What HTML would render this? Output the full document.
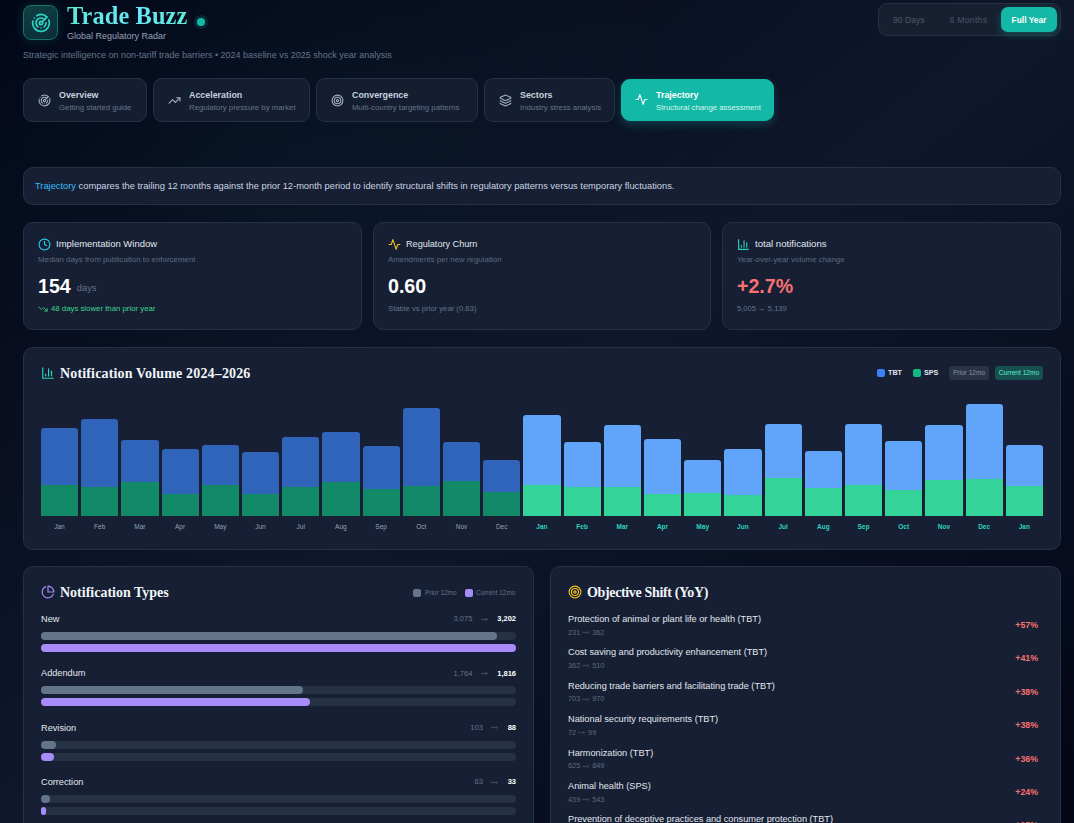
<!DOCTYPE html>
<html><head><meta charset="utf-8">
<style>
*{box-sizing:border-box;margin:0;padding:0}
html,body{width:1074px;height:823px;overflow:hidden}
body{background:#0a1020;font-family:"Liberation Sans",sans-serif;color:#e2e8f0;position:relative}
.abs{position:absolute;white-space:nowrap}
.card{position:absolute;background:#161f33;border:1px solid #273145;border-radius:10px}
.serif{font-family:"Liberation Serif",serif}
svg{display:block}
.tab{position:absolute;top:78px;height:44px;border-radius:9px;background:#151e31;border:1px solid #263044}
.tab .ic{position:absolute;left:13.6px;top:14.6px}
.tab .t1{position:absolute;left:35px;top:11px;font-size:8.9px;line-height:11px;font-weight:700;color:#c6d1df}
.tab .t2{position:absolute;left:35px;top:24px;font-size:7.8px;line-height:10px;color:#64748b}
.kt{font-size:9.5px;line-height:12px;color:#e2e8f0}
.ks{font-size:7.9px;line-height:10px;color:#5d6b81}
.bar{position:absolute;border-radius:3px 3px 0 0;overflow:hidden}
.ml{position:absolute;top:522px;font-size:6.5px;line-height:9px;text-align:center;width:37px}
.h2{font-family:"Liberation Serif",serif;font-weight:700;font-size:14px;line-height:16px;color:#f1f5f9}
</style></head><body>
<div class="abs" style="left:0;top:0;width:1074px;height:823px;background:linear-gradient(to bottom right,#020617 0%,#0f172a 50%,#020617 100%)"></div>
<div class="abs" style="left:0;top:0;width:1074px;height:823px;background:radial-gradient(ellipse 420px 260px at 300px 150px,rgba(20,184,166,0.045),rgba(20,184,166,0) 100%)"></div>

<div class="abs" style="left:23px;top:5px;width:35px;height:35px;border-radius:8px;background:linear-gradient(160deg,#0f4044,#0b2c3a);border:1px solid #177268;box-shadow:0 0 12px rgba(20,184,166,0.18)">
  <svg width="20" height="20" viewBox="0 0 24 24" style="position:absolute;left:6.8px;top:6.6px" fill="none" stroke="#2dd4bf" stroke-width="2" stroke-linecap="round" stroke-linejoin="round"><path d="M19.07 4.93A10 10 0 0 0 6.99 3.34"/><path d="M4 6h.01"/><path d="M2.29 9.62A10 10 0 1 0 21.31 8.35"/><path d="M16.24 7.76A6 6 0 1 0 8.23 16.67"/><path d="M12 18h.01"/><path d="M17.99 11.66A6 6 0 0 1 15.77 16.67"/><circle cx="12" cy="12" r="2"/><path d="m13.41 10.59 5.66-5.66"/></svg>
</div>
<div class="abs serif" style="left:67px;top:0.9px;font-size:24.4px;letter-spacing:0.1px;font-weight:700;line-height:30px;color:#5eead4;background:linear-gradient(90deg,#5eead4,#67e8f9 60%,#5eead4);-webkit-background-clip:text;background-clip:text;-webkit-text-fill-color:transparent">Trade Buzz</div>
<div class="abs" style="left:193.5px;top:14.8px;width:14.5px;height:14.5px;border-radius:50%;background:rgba(20,184,166,0.16)"></div>
<div class="abs" style="left:196.6px;top:17.9px;width:8.4px;height:8.4px;border-radius:50%;background:#14b8a6"></div>
<div class="abs" style="left:67px;top:30px;font-size:9px;line-height:12px;color:#94a3b8">Global Regulatory Radar</div>
<div class="abs" style="left:23px;top:49px;font-size:9px;line-height:12px;color:#64748b">Strategic intelligence on non-tariff trade barriers • 2024 baseline vs 2025 shock year analysis</div>
<div class="abs" style="left:878px;top:3px;width:183px;height:33px;border-radius:9px;background:#172031;border:1px solid #263043"></div>
<div class="abs" style="left:893px;top:15px;font-size:8.6px;line-height:11px;color:#4b5668">90 Days</div>
<div class="abs" style="left:949.5px;top:15px;font-size:8.6px;letter-spacing:0.3px;line-height:11px;color:#4b5668">6 Months</div>
<div class="abs" style="left:1001px;top:7px;width:56px;height:25px;border-radius:7px;background:#14b8a6;box-shadow:0 3px 8px rgba(20,184,166,0.3);font-size:8.4px;font-weight:700;color:#fff;text-align:center;line-height:27px">Full Year</div>

<div class="tab" style="left:23px;width:124px"><svg class="ic" width="13" height="13" viewBox="0 0 24 24" fill="none" stroke="#a3b1c6" stroke-width="2" stroke-linecap="round" stroke-linejoin="round"><path d="M19.07 4.93A10 10 0 0 0 6.99 3.34"/><path d="M4 6h.01"/><path d="M2.29 9.62A10 10 0 1 0 21.31 8.35"/><path d="M16.24 7.76A6 6 0 1 0 8.23 16.67"/><path d="M12 18h.01"/><path d="M17.99 11.66A6 6 0 0 1 15.77 16.67"/><circle cx="12" cy="12" r="2"/><path d="m13.41 10.59 5.66-5.66"/></svg><div class="t1">Overview</div><div class="t2">Getting started guide</div></div>
<div class="tab" style="left:153px;width:157px"><svg class="ic" width="13" height="13" viewBox="0 0 24 24" fill="none" stroke="#a3b1c6" stroke-width="2" stroke-linecap="round" stroke-linejoin="round"><polyline points="22 7 13.5 15.5 8.5 10.5 2 17"/><polyline points="16 7 22 7 22 13"/></svg><div class="t1">Acceleration</div><div class="t2">Regulatory pressure by market</div></div>
<div class="tab" style="left:316px;width:162px"><svg class="ic" width="13" height="13" viewBox="0 0 24 24" fill="none" stroke="#a3b1c6" stroke-width="2" stroke-linecap="round" stroke-linejoin="round"><circle cx="12" cy="12" r="10"/><circle cx="12" cy="12" r="6"/><circle cx="12" cy="12" r="2"/></svg><div class="t1">Convergence</div><div class="t2">Multi-country targeting patterns</div></div>
<div class="tab" style="left:484px;width:131px"><svg class="ic" width="13" height="13" viewBox="0 0 24 24" fill="none" stroke="#a3b1c6" stroke-width="2" stroke-linecap="round" stroke-linejoin="round"><path d="m12.83 2.18a2 2 0 0 0-1.66 0L2.6 6.08a1 1 0 0 0 0 1.83l8.58 3.91a2 2 0 0 0 1.66 0l8.58-3.9a1 1 0 0 0 0-1.83Z"/><path d="m22 17.65-9.17 4.16a2 2 0 0 1-1.66 0L2 17.65"/><path d="m22 12.65-9.17 4.16a2 2 0 0 1-1.66 0L2 12.65"/></svg><div class="t1">Sectors</div><div class="t2">Industry stress analysis</div></div>
<div class="tab" style="left:621px;width:153px;top:79px;height:42px;background:#14b8a6;border-color:#14b8a6;box-shadow:0 4px 10px rgba(20,184,166,0.25)"><svg class="ic" style="top:13.4px;left:12.8px" width="13" height="13" viewBox="0 0 24 24" fill="none" stroke="#ffffff" stroke-width="2" stroke-linecap="round" stroke-linejoin="round"><path d="M22 12h-4l-3 9L9 3l-3 9H2"/></svg><div class="t1" style="color:#fff;top:9.8px;left:34px">Trajectory</div><div class="t2" style="color:#d5f5ef;top:23px;left:34px">Structural change assessment</div></div>
<div class="card" style="left:23px;top:167px;width:1038px;height:38px;border-radius:10px"></div>
<div class="abs" style="left:35px;top:180px;font-size:9.3px;line-height:12px;color:#cbd5e1"><span style="color:#38bdf8">Trajectory</span> compares the trailing 12 months against the prior 12-month period to identify structural shifts in regulatory patterns versus temporary fluctuations.</div>

<div class="card" style="left:23px;top:222px;width:339px;height:108px"><div class="abs" style="left:13.7px;top:14.7px"><svg width="13" height="13" viewBox="0 0 24 24" fill="none" stroke="#22d3ee" stroke-width="2" stroke-linecap="round" stroke-linejoin="round"><circle cx="12" cy="12" r="10"/><polyline points="12 6 12 12 16 14"/></svg></div><div class="abs kt" style="left:32px;top:15px;font-size:9.47px">Implementation Window</div><div class="abs ks" style="left:14px;top:32px">Median days from publication to enforcement</div><div class="abs" style="left:14px;top:50.6px;font-size:19.6px;line-height:24px;font-weight:700;color:#ffffff">154<span style="font-size:9.4px;font-weight:400;color:#64748b;margin-left:6px;position:relative;top:-1.5px">days</span></div><div class="abs" style="left:14px;top:80.5px;font-size:8px;line-height:10px"><svg style="display:inline-block;vertical-align:-1px;margin-right:3px" width="10" height="10" viewBox="0 0 24 24" fill="none" stroke="#3fd68c" stroke-width="2" stroke-linecap="round" stroke-linejoin="round"><polyline points="22 17 13.5 8.5 8.5 13.5 2 7"/><polyline points="16 17 22 17 22 11"/></svg><span style="color:#3fd68c;font-size:7.8px;position:relative;top:-1.2px">48 days slower than prior year</span></div></div>
<div class="card" style="left:373px;top:222px;width:338px;height:108px"><div class="abs" style="left:13.7px;top:14.7px"><svg width="13" height="13" viewBox="0 0 24 24" fill="none" stroke="#f2c21f" stroke-width="2" stroke-linecap="round" stroke-linejoin="round"><path d="M22 12h-4l-3 9L9 3l-3 9H2"/></svg></div><div class="abs kt" style="left:32px;top:15px;font-size:9.12px">Regulatory Churn</div><div class="abs ks" style="left:14px;top:32px">Amendments per new regulation</div><div class="abs" style="left:14px;top:50.6px;font-size:19.6px;line-height:24px;font-weight:700;color:#ffffff">0.60</div><div class="abs" style="left:14px;top:81.2px;font-size:8px;line-height:10px"><span style="color:#64748b;font-size:7.7px">Stable vs prior year (0.63)</span></div></div>
<div class="card" style="left:722px;top:222px;width:339px;height:108px"><div class="abs" style="left:13.7px;top:14.7px"><svg width="13" height="13" viewBox="0 0 24 24" fill="none" stroke="#2dd4bf" stroke-width="2" stroke-linecap="round" stroke-linejoin="round"><path d="M3 3v18h18"/><path d="M18 17V9"/><path d="M13 17V5"/><path d="M8 17v-3"/></svg></div><div class="abs kt" style="left:32px;top:15px;font-size:9.62px">total notifications</div><div class="abs ks" style="left:14px;top:32px">Year-over-year volume change</div><div class="abs" style="left:14px;top:50.6px;font-size:19.6px;line-height:24px;font-weight:700;color:#f87171">+2.7%</div><div class="abs" style="left:14px;top:81.2px;font-size:8px;line-height:10px"><span style="color:#64748b;font-size:7.6px">5,005 &#8594; 5,139</span></div></div>
<div class="card" style="left:23px;top:347px;width:1038px;height:203px"></div>
<div class="abs" style="left:40.8px;top:365.8px"><svg width="14" height="14" viewBox="0 0 24 24" fill="none" stroke="#2dd4bf" stroke-width="2" stroke-linecap="round" stroke-linejoin="round"><path d="M3 3v18h18"/><path d="M18 17V9"/><path d="M13 17V5"/><path d="M8 17v-3"/></svg></div>
<div class="abs h2" style="left:60px;top:366px;letter-spacing:0.16px">Notification Volume 2024–2026</div>
<div class="abs" style="left:877px;top:369px;width:8px;height:8px;border-radius:2px;background:#3b82f6"></div>
<div class="abs" style="left:888px;top:367px;font-size:7.2px;line-height:11px;font-weight:700;color:#e2e8f0">TBT</div>
<div class="abs" style="left:913px;top:369px;width:8px;height:8px;border-radius:2px;background:#10b981"></div>
<div class="abs" style="left:924px;top:367px;font-size:7.2px;line-height:11px;font-weight:700;color:#e2e8f0">SPS</div>
<div class="abs" style="left:949px;top:366px;width:40px;height:14px;border-radius:3px;background:#2a3446;color:#8391a7;font-size:6.6px;line-height:14px;text-align:center">Prior 12mo</div>
<div class="abs" style="left:995px;top:366px;width:48px;height:14px;border-radius:3px;background:#16504f;color:#5eead4;font-size:6.6px;line-height:14px;text-align:center">Current 12mo</div>
<div class="bar" style="left:41.00px;top:428px;width:37.2px;height:88px;background:#3064bb"><div style="position:absolute;left:0;right:0;bottom:0;height:31px;background:#128a68"></div></div>
<div class="ml" style="left:41.00px;color:#94a3b8;font-weight:400">Jan</div>
<div class="bar" style="left:81.20px;top:419px;width:37.2px;height:97px;background:#3064bb"><div style="position:absolute;left:0;right:0;bottom:0;height:29px;background:#128a68"></div></div>
<div class="ml" style="left:81.20px;color:#94a3b8;font-weight:400">Feb</div>
<div class="bar" style="left:121.40px;top:440px;width:37.2px;height:76px;background:#3064bb"><div style="position:absolute;left:0;right:0;bottom:0;height:34px;background:#128a68"></div></div>
<div class="ml" style="left:121.40px;color:#94a3b8;font-weight:400">Mar</div>
<div class="bar" style="left:161.60px;top:449px;width:37.2px;height:67px;background:#3064bb"><div style="position:absolute;left:0;right:0;bottom:0;height:22px;background:#128a68"></div></div>
<div class="ml" style="left:161.60px;color:#94a3b8;font-weight:400">Apr</div>
<div class="bar" style="left:201.80px;top:445px;width:37.2px;height:71px;background:#3064bb"><div style="position:absolute;left:0;right:0;bottom:0;height:31px;background:#128a68"></div></div>
<div class="ml" style="left:201.80px;color:#94a3b8;font-weight:400">May</div>
<div class="bar" style="left:242.00px;top:452px;width:37.2px;height:64px;background:#3064bb"><div style="position:absolute;left:0;right:0;bottom:0;height:22px;background:#128a68"></div></div>
<div class="ml" style="left:242.00px;color:#94a3b8;font-weight:400">Jun</div>
<div class="bar" style="left:282.20px;top:437px;width:37.2px;height:79px;background:#3064bb"><div style="position:absolute;left:0;right:0;bottom:0;height:29px;background:#128a68"></div></div>
<div class="ml" style="left:282.20px;color:#94a3b8;font-weight:400">Jul</div>
<div class="bar" style="left:322.40px;top:432px;width:37.2px;height:84px;background:#3064bb"><div style="position:absolute;left:0;right:0;bottom:0;height:34px;background:#128a68"></div></div>
<div class="ml" style="left:322.40px;color:#94a3b8;font-weight:400">Aug</div>
<div class="bar" style="left:362.60px;top:446px;width:37.2px;height:70px;background:#3064bb"><div style="position:absolute;left:0;right:0;bottom:0;height:27px;background:#128a68"></div></div>
<div class="ml" style="left:362.60px;color:#94a3b8;font-weight:400">Sep</div>
<div class="bar" style="left:402.80px;top:408px;width:37.2px;height:108px;background:#3064bb"><div style="position:absolute;left:0;right:0;bottom:0;height:30px;background:#128a68"></div></div>
<div class="ml" style="left:402.80px;color:#94a3b8;font-weight:400">Oct</div>
<div class="bar" style="left:443.00px;top:442px;width:37.2px;height:74px;background:#3064bb"><div style="position:absolute;left:0;right:0;bottom:0;height:35px;background:#128a68"></div></div>
<div class="ml" style="left:443.00px;color:#94a3b8;font-weight:400">Nov</div>
<div class="bar" style="left:483.20px;top:460px;width:37.2px;height:56px;background:#3064bb"><div style="position:absolute;left:0;right:0;bottom:0;height:24px;background:#128a68"></div></div>
<div class="ml" style="left:483.20px;color:#94a3b8;font-weight:400">Dec</div>
<div class="bar" style="left:523.40px;top:415px;width:37.2px;height:101px;background:#60a5fa"><div style="position:absolute;left:0;right:0;bottom:0;height:31px;background:#34d399"></div></div>
<div class="ml" style="left:523.40px;color:#2dd4bf;font-weight:700">Jan</div>
<div class="bar" style="left:563.60px;top:442px;width:37.2px;height:74px;background:#60a5fa"><div style="position:absolute;left:0;right:0;bottom:0;height:29px;background:#34d399"></div></div>
<div class="ml" style="left:563.60px;color:#2dd4bf;font-weight:700">Feb</div>
<div class="bar" style="left:603.80px;top:425px;width:37.2px;height:91px;background:#60a5fa"><div style="position:absolute;left:0;right:0;bottom:0;height:29px;background:#34d399"></div></div>
<div class="ml" style="left:603.80px;color:#2dd4bf;font-weight:700">Mar</div>
<div class="bar" style="left:644.00px;top:439px;width:37.2px;height:77px;background:#60a5fa"><div style="position:absolute;left:0;right:0;bottom:0;height:22px;background:#34d399"></div></div>
<div class="ml" style="left:644.00px;color:#2dd4bf;font-weight:700">Apr</div>
<div class="bar" style="left:684.20px;top:460px;width:37.2px;height:56px;background:#60a5fa"><div style="position:absolute;left:0;right:0;bottom:0;height:23px;background:#34d399"></div></div>
<div class="ml" style="left:684.20px;color:#2dd4bf;font-weight:700">May</div>
<div class="bar" style="left:724.40px;top:449px;width:37.2px;height:67px;background:#60a5fa"><div style="position:absolute;left:0;right:0;bottom:0;height:21px;background:#34d399"></div></div>
<div class="ml" style="left:724.40px;color:#2dd4bf;font-weight:700">Jun</div>
<div class="bar" style="left:764.60px;top:424px;width:37.2px;height:92px;background:#60a5fa"><div style="position:absolute;left:0;right:0;bottom:0;height:38px;background:#34d399"></div></div>
<div class="ml" style="left:764.60px;color:#2dd4bf;font-weight:700">Jul</div>
<div class="bar" style="left:804.80px;top:451px;width:37.2px;height:65px;background:#60a5fa"><div style="position:absolute;left:0;right:0;bottom:0;height:28px;background:#34d399"></div></div>
<div class="ml" style="left:804.80px;color:#2dd4bf;font-weight:700">Aug</div>
<div class="bar" style="left:845.00px;top:424px;width:37.2px;height:92px;background:#60a5fa"><div style="position:absolute;left:0;right:0;bottom:0;height:31px;background:#34d399"></div></div>
<div class="ml" style="left:845.00px;color:#2dd4bf;font-weight:700">Sep</div>
<div class="bar" style="left:885.20px;top:441px;width:37.2px;height:75px;background:#60a5fa"><div style="position:absolute;left:0;right:0;bottom:0;height:26px;background:#34d399"></div></div>
<div class="ml" style="left:885.20px;color:#2dd4bf;font-weight:700">Oct</div>
<div class="bar" style="left:925.40px;top:425px;width:37.2px;height:91px;background:#60a5fa"><div style="position:absolute;left:0;right:0;bottom:0;height:36px;background:#34d399"></div></div>
<div class="ml" style="left:925.40px;color:#2dd4bf;font-weight:700">Nov</div>
<div class="bar" style="left:965.60px;top:404px;width:37.2px;height:112px;background:#60a5fa"><div style="position:absolute;left:0;right:0;bottom:0;height:37px;background:#34d399"></div></div>
<div class="ml" style="left:965.60px;color:#2dd4bf;font-weight:700">Dec</div>
<div class="bar" style="left:1005.80px;top:445px;width:37.2px;height:71px;background:#60a5fa"><div style="position:absolute;left:0;right:0;bottom:0;height:30px;background:#34d399"></div></div>
<div class="ml" style="left:1005.80px;color:#2dd4bf;font-weight:700">Jan</div>
<div class="card" style="left:23px;top:566px;width:511px;height:300px"></div>
<div class="abs" style="left:41px;top:585px"><svg width="14" height="14" viewBox="0 0 24 24" fill="none" stroke="#a78bfa" stroke-width="2" stroke-linecap="round" stroke-linejoin="round"><path d="M21.21 15.89A10 10 0 1 1 8 2.83"/><path d="M22 12A10 10 0 0 0 12 2v10z"/></svg></div>
<div class="abs h2" style="left:60px;top:584.9px">Notification Types</div>
<div class="abs" style="left:413px;top:588.5px;width:8px;height:8px;border-radius:2px;background:#64748b"></div>
<div class="abs" style="left:425px;top:588px;font-size:6.45px;line-height:10px;color:#64748b">Prior 12mo</div>
<div class="abs" style="left:465px;top:588.5px;width:8px;height:8px;border-radius:2px;background:#a78bfa"></div>
<div class="abs" style="left:476px;top:588px;font-size:6.45px;line-height:10px;color:#64748b">Current 12mo</div>
<div class="abs" style="left:41px;top:613.0px;font-size:9.2px;line-height:12px;color:#e2e8f0">New</div>
<div class="abs" style="right:558px;top:613.2px;font-size:7.5px;line-height:12px;color:#ffffff;font-weight:700;text-align:right"><span style="color:#64748b;font-weight:400;font-size:7.6px">3,075</span><svg style="display:inline-block;vertical-align:middle;position:relative;top:1px;margin:-2px 9px 0 8.6px" width="7.2" height="5" viewBox="0 0 7.2 5"><path d="M0 2.5H5.7" stroke="#3c475a" stroke-width="1.3"/><path d="M4.800000000000001 0.7L7.2 2.5L4.800000000000001 4.3Z" fill="#3c475a"/></svg>3,202</div>
<div class="abs" style="left:41px;top:632.0px;width:475px;height:8px;border-radius:4px;background:#263143"></div>
<div class="abs" style="left:41px;top:632.0px;width:456.2px;height:8px;border-radius:4px;background:#64748b"></div>
<div class="abs" style="left:41px;top:644.0px;width:475px;height:8px;border-radius:4px;background:#263143"></div>
<div class="abs" style="left:41px;top:644.0px;width:475.0px;height:8px;border-radius:4px;background:#a78bfa"></div>
<div class="abs" style="left:41px;top:667.3px;font-size:9.2px;line-height:12px;color:#e2e8f0">Addendum</div>
<div class="abs" style="right:558px;top:667.5px;font-size:7.5px;line-height:12px;color:#ffffff;font-weight:700;text-align:right"><span style="color:#64748b;font-weight:400;font-size:7.6px">1,764</span><svg style="display:inline-block;vertical-align:middle;position:relative;top:1px;margin:-2px 9px 0 8.6px" width="7.2" height="5" viewBox="0 0 7.2 5"><path d="M0 2.5H5.7" stroke="#3c475a" stroke-width="1.3"/><path d="M4.800000000000001 0.7L7.2 2.5L4.800000000000001 4.3Z" fill="#3c475a"/></svg>1,816</div>
<div class="abs" style="left:41px;top:686.3px;width:475px;height:8px;border-radius:4px;background:#263143"></div>
<div class="abs" style="left:41px;top:686.3px;width:261.7px;height:8px;border-radius:4px;background:#64748b"></div>
<div class="abs" style="left:41px;top:698.3px;width:475px;height:8px;border-radius:4px;background:#263143"></div>
<div class="abs" style="left:41px;top:698.3px;width:269.4px;height:8px;border-radius:4px;background:#a78bfa"></div>
<div class="abs" style="left:41px;top:721.7px;font-size:9.2px;line-height:12px;color:#e2e8f0">Revision</div>
<div class="abs" style="right:558px;top:721.9px;font-size:7.5px;line-height:12px;color:#ffffff;font-weight:700;text-align:right"><span style="color:#64748b;font-weight:400;font-size:7.6px">103</span><svg style="display:inline-block;vertical-align:middle;position:relative;top:1px;margin:-2px 9px 0 8.6px" width="7.2" height="5" viewBox="0 0 7.2 5"><path d="M0 2.5H5.7" stroke="#3c475a" stroke-width="1.3"/><path d="M4.800000000000001 0.7L7.2 2.5L4.800000000000001 4.3Z" fill="#3c475a"/></svg>88</div>
<div class="abs" style="left:41px;top:740.7px;width:475px;height:8px;border-radius:4px;background:#263143"></div>
<div class="abs" style="left:41px;top:740.7px;width:15.3px;height:8px;border-radius:4px;background:#64748b"></div>
<div class="abs" style="left:41px;top:752.7px;width:475px;height:8px;border-radius:4px;background:#263143"></div>
<div class="abs" style="left:41px;top:752.7px;width:13.1px;height:8px;border-radius:4px;background:#a78bfa"></div>
<div class="abs" style="left:41px;top:776.0px;font-size:9.2px;line-height:12px;color:#e2e8f0">Correction</div>
<div class="abs" style="right:558px;top:776.2px;font-size:7.5px;line-height:12px;color:#ffffff;font-weight:700;text-align:right"><span style="color:#64748b;font-weight:400;font-size:7.6px">63</span><svg style="display:inline-block;vertical-align:middle;position:relative;top:1px;margin:-2px 9px 0 8.6px" width="7.2" height="5" viewBox="0 0 7.2 5"><path d="M0 2.5H5.7" stroke="#3c475a" stroke-width="1.3"/><path d="M4.800000000000001 0.7L7.2 2.5L4.800000000000001 4.3Z" fill="#3c475a"/></svg>33</div>
<div class="abs" style="left:41px;top:795.0px;width:475px;height:8px;border-radius:4px;background:#263143"></div>
<div class="abs" style="left:41px;top:795.0px;width:9.3px;height:8px;border-radius:4px;background:#64748b"></div>
<div class="abs" style="left:41px;top:807.0px;width:475px;height:8px;border-radius:4px;background:#263143"></div>
<div class="abs" style="left:41px;top:807.0px;width:5.0px;height:8px;border-radius:4px;background:#a78bfa"></div>
<div class="card" style="left:550px;top:566px;width:511px;height:300px"></div>
<div class="abs" style="left:568px;top:585px"><svg width="14" height="14" viewBox="0 0 24 24" fill="none" stroke="#f2c21f" stroke-width="2" stroke-linecap="round" stroke-linejoin="round"><circle cx="12" cy="12" r="10"/><circle cx="12" cy="12" r="6"/><circle cx="12" cy="12" r="2"/></svg></div>
<div class="abs h2" style="left:587px;top:584.9px;letter-spacing:-0.35px">Objective Shift (YoY)</div>
<div class="abs" style="left:568px;top:613.0px;font-size:9.2px;line-height:12px;color:#e2e8f0">Protection of animal or plant life or health (TBT)</div>
<div class="abs" style="left:568px;top:627.5px;font-size:7.4px;line-height:10px;color:#5d6c82">231<svg style="display:inline-block;vertical-align:middle;position:relative;top:1px;margin:-2px 2.2px 0 2px" width="7.6" height="5" viewBox="0 0 7.6 5"><path d="M0 2.5H6.1" stroke="#364052" stroke-width="1.3"/><path d="M5.199999999999999 0.7L7.6 2.5L5.199999999999999 4.3Z" fill="#364052"/></svg>362</div>
<div class="abs" style="right:36px;top:619.0px;font-size:8.8px;line-height:12px;font-weight:700;color:#f87171">+57%</div>
<div class="abs" style="left:568px;top:646.4px;font-size:9.2px;line-height:12px;color:#e2e8f0">Cost saving and productivity enhancement (TBT)</div>
<div class="abs" style="left:568px;top:660.9px;font-size:7.4px;line-height:10px;color:#5d6c82">362<svg style="display:inline-block;vertical-align:middle;position:relative;top:1px;margin:-2px 2.2px 0 2px" width="7.6" height="5" viewBox="0 0 7.6 5"><path d="M0 2.5H6.1" stroke="#364052" stroke-width="1.3"/><path d="M5.199999999999999 0.7L7.6 2.5L5.199999999999999 4.3Z" fill="#364052"/></svg>510</div>
<div class="abs" style="right:36px;top:652.4px;font-size:8.8px;line-height:12px;font-weight:700;color:#f87171">+41%</div>
<div class="abs" style="left:568px;top:679.8px;font-size:9.2px;line-height:12px;color:#e2e8f0">Reducing trade barriers and facilitating trade (TBT)</div>
<div class="abs" style="left:568px;top:694.3px;font-size:7.4px;line-height:10px;color:#5d6c82">703<svg style="display:inline-block;vertical-align:middle;position:relative;top:1px;margin:-2px 2.2px 0 2px" width="7.6" height="5" viewBox="0 0 7.6 5"><path d="M0 2.5H6.1" stroke="#364052" stroke-width="1.3"/><path d="M5.199999999999999 0.7L7.6 2.5L5.199999999999999 4.3Z" fill="#364052"/></svg>970</div>
<div class="abs" style="right:36px;top:685.8px;font-size:8.8px;line-height:12px;font-weight:700;color:#f87171">+38%</div>
<div class="abs" style="left:568px;top:713.2px;font-size:9.2px;line-height:12px;color:#e2e8f0">National security requirements (TBT)</div>
<div class="abs" style="left:568px;top:727.7px;font-size:7.4px;line-height:10px;color:#5d6c82">72<svg style="display:inline-block;vertical-align:middle;position:relative;top:1px;margin:-2px 2.2px 0 2px" width="7.6" height="5" viewBox="0 0 7.6 5"><path d="M0 2.5H6.1" stroke="#364052" stroke-width="1.3"/><path d="M5.199999999999999 0.7L7.6 2.5L5.199999999999999 4.3Z" fill="#364052"/></svg>99</div>
<div class="abs" style="right:36px;top:719.2px;font-size:8.8px;line-height:12px;font-weight:700;color:#f87171">+38%</div>
<div class="abs" style="left:568px;top:746.6px;font-size:9.2px;line-height:12px;color:#e2e8f0">Harmonization (TBT)</div>
<div class="abs" style="left:568px;top:761.1px;font-size:7.4px;line-height:10px;color:#5d6c82">625<svg style="display:inline-block;vertical-align:middle;position:relative;top:1px;margin:-2px 2.2px 0 2px" width="7.6" height="5" viewBox="0 0 7.6 5"><path d="M0 2.5H6.1" stroke="#364052" stroke-width="1.3"/><path d="M5.199999999999999 0.7L7.6 2.5L5.199999999999999 4.3Z" fill="#364052"/></svg>849</div>
<div class="abs" style="right:36px;top:752.6px;font-size:8.8px;line-height:12px;font-weight:700;color:#f87171">+36%</div>
<div class="abs" style="left:568px;top:780.0px;font-size:9.2px;line-height:12px;color:#e2e8f0">Animal health (SPS)</div>
<div class="abs" style="left:568px;top:794.5px;font-size:7.4px;line-height:10px;color:#5d6c82">439<svg style="display:inline-block;vertical-align:middle;position:relative;top:1px;margin:-2px 2.2px 0 2px" width="7.6" height="5" viewBox="0 0 7.6 5"><path d="M0 2.5H6.1" stroke="#364052" stroke-width="1.3"/><path d="M5.199999999999999 0.7L7.6 2.5L5.199999999999999 4.3Z" fill="#364052"/></svg>543</div>
<div class="abs" style="right:36px;top:786.0px;font-size:8.8px;line-height:12px;font-weight:700;color:#f87171">+24%</div>
<div class="abs" style="left:568px;top:813.4px;font-size:9.2px;line-height:12px;color:#e2e8f0">Prevention of deceptive practices and consumer protection (TBT)</div>
<div class="abs" style="left:568px;top:827.9px;font-size:7.4px;line-height:10px;color:#5d6c82">190<svg style="display:inline-block;vertical-align:middle;position:relative;top:1px;margin:-2px 2.2px 0 2px" width="7.6" height="5" viewBox="0 0 7.6 5"><path d="M0 2.5H6.1" stroke="#364052" stroke-width="1.3"/><path d="M5.199999999999999 0.7L7.6 2.5L5.199999999999999 4.3Z" fill="#364052"/></svg>218</div>
<div class="abs" style="right:36px;top:819.4px;font-size:8.8px;line-height:12px;font-weight:700;color:#f87171">+15%</div>
</body></html>
